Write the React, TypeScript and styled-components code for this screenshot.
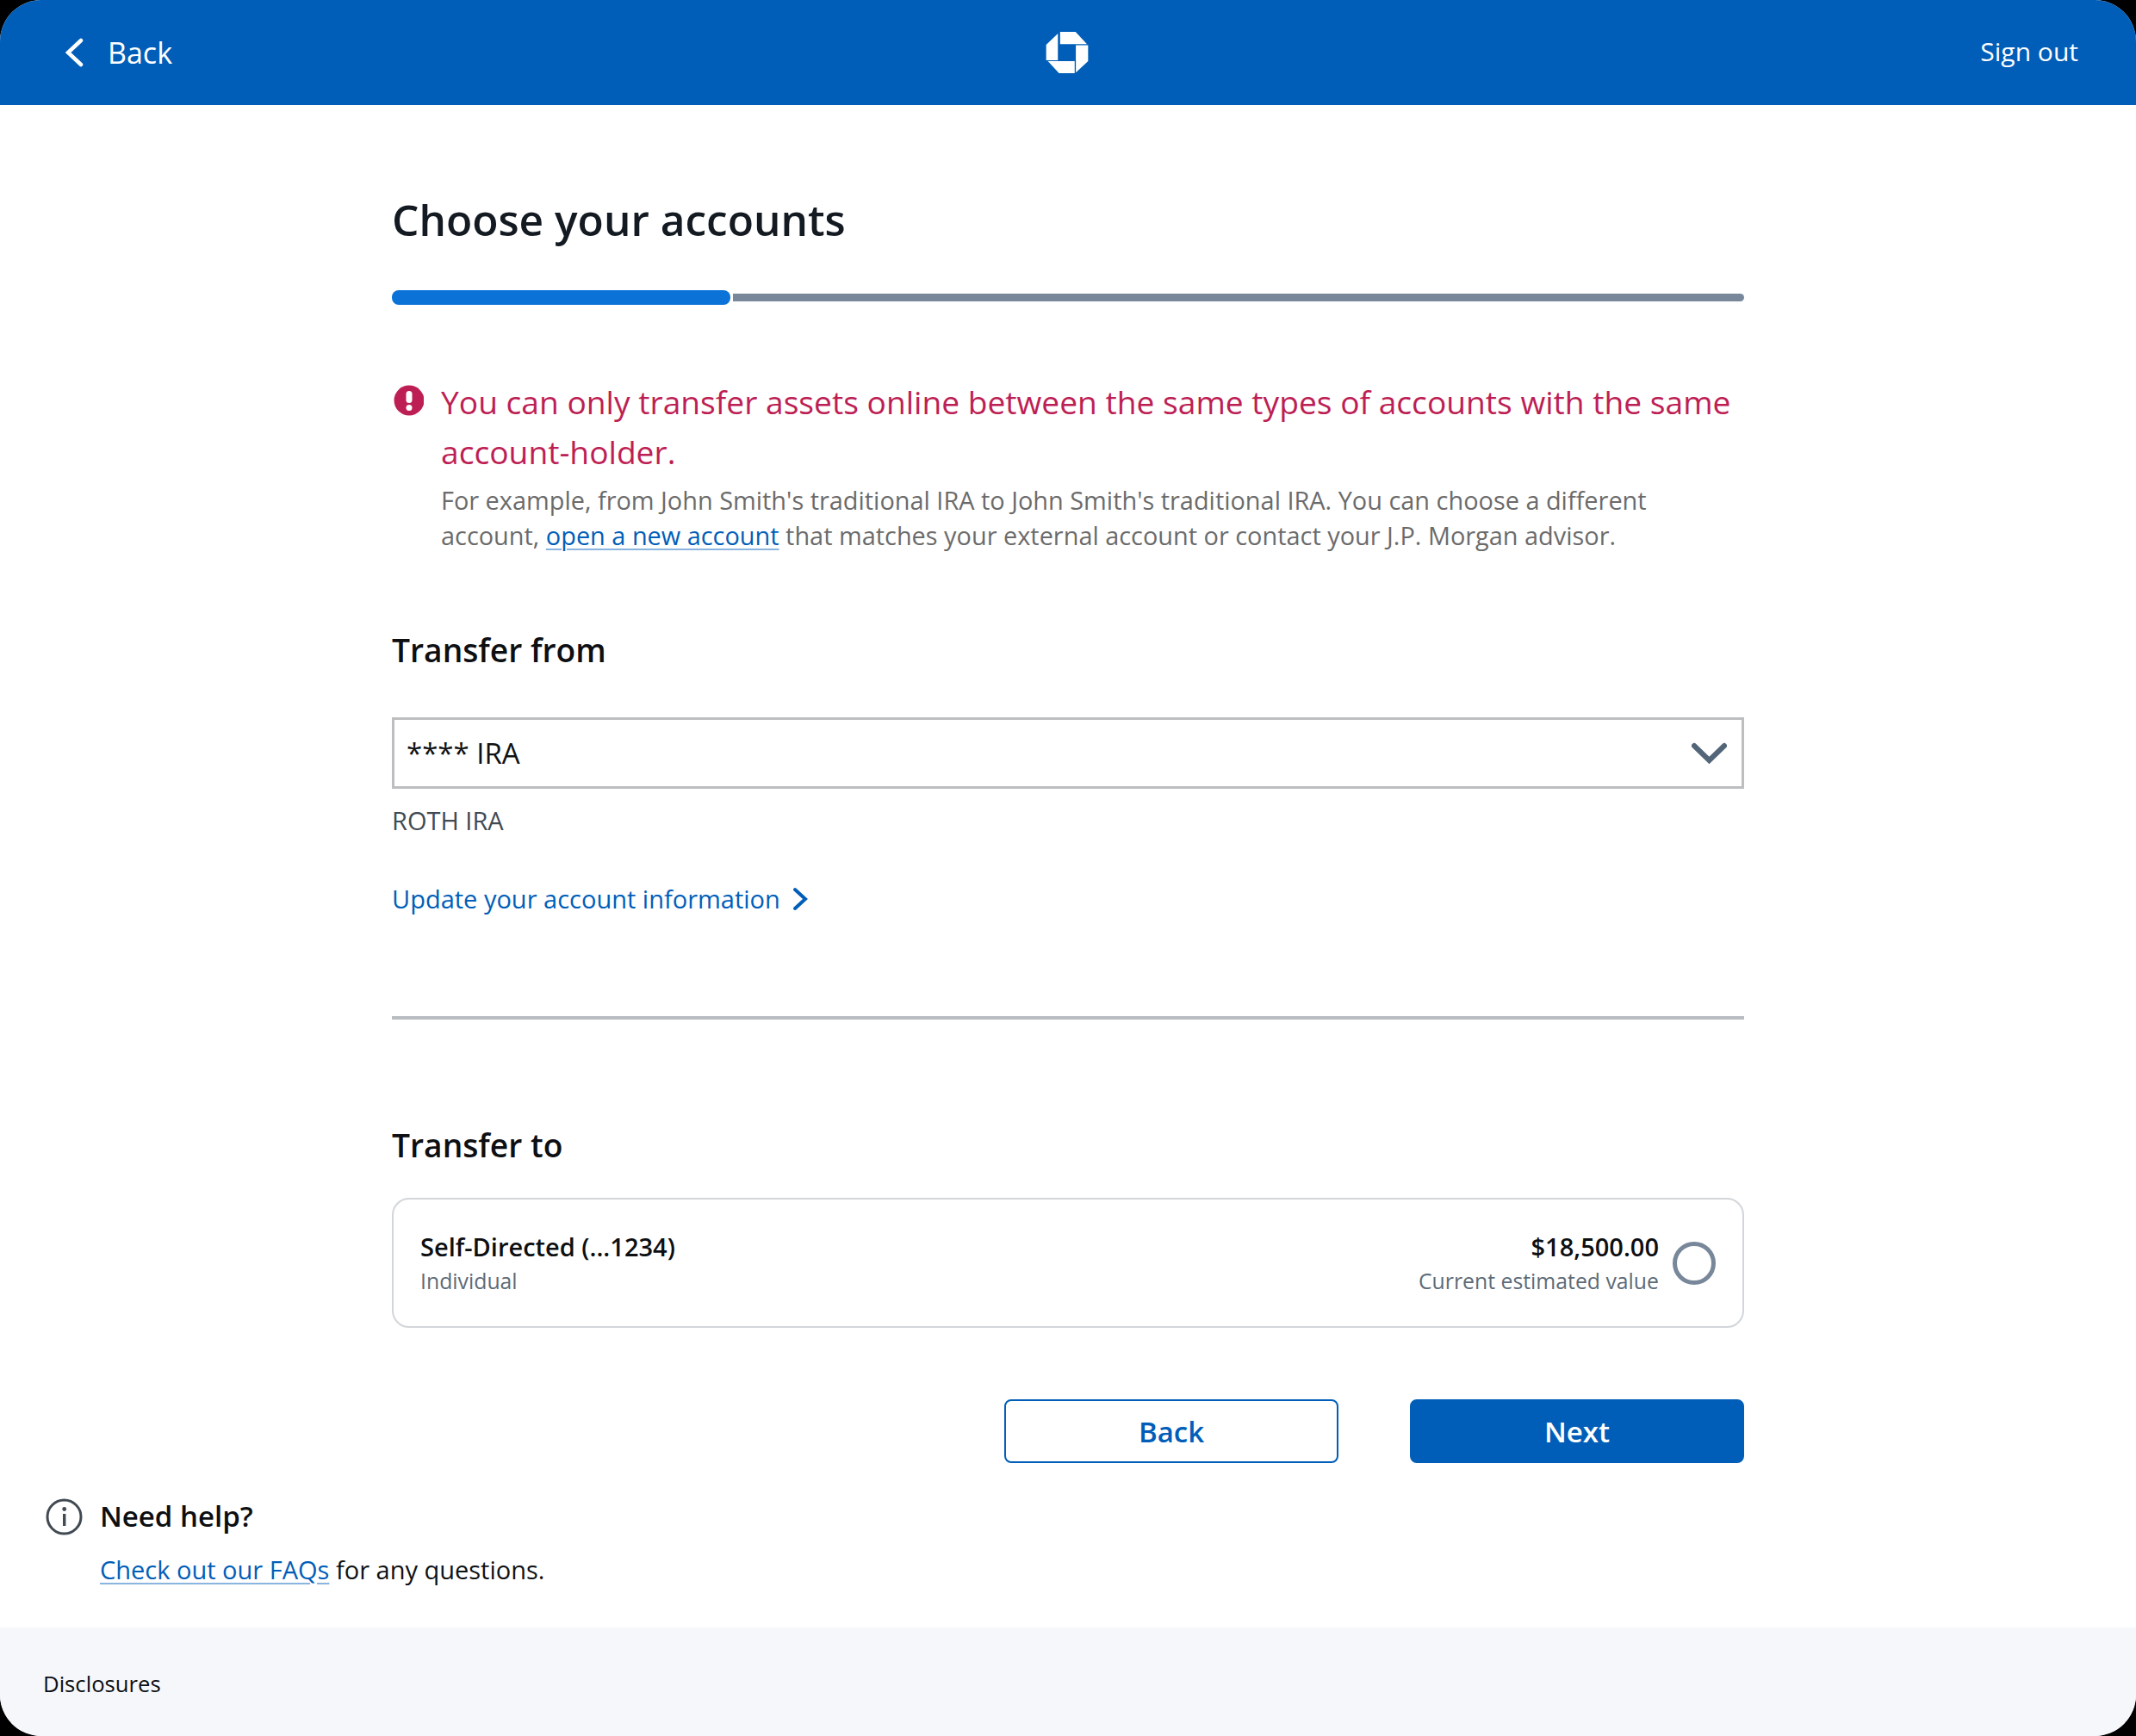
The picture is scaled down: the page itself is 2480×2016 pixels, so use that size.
import React from "react";
import styled, { createGlobalStyle } from "styled-components";

const Global = createGlobalStyle`
  html, body { margin: 0; padding: 0; background: #000; }
  * { box-sizing: border-box; }
  body { font-family: "Open Sans", "Noto Sans", sans-serif; }
`;

const Screen = styled.div`
  width: 2480px;
  height: 2016px;
  background: #fff;
  border-radius: 48px;
  overflow: hidden;
  display: flex;
  flex-direction: column;
`;

const Header = styled.header`
  height: 122px;
  flex: none;
  background: #015eb8;
  color: #fff;
  display: grid;
  grid-template-columns: 1fr auto 1fr;
  align-items: center;
  padding: 0 67px 1px 64px;
`;

const HeaderBack = styled.a`
  display: flex;
  align-items: center;
  gap: 27px;
  margin-left: 12px;
  font-size: 34px;
  font-weight: 500;
`;

const SignOut = styled.a`
  justify-self: end;
  font-size: 30px;
  font-weight: 500;
  margin-bottom: 2px;
`;

const Column = styled.main`
  width: 1570px;
  margin: 0 auto;
  flex: none;
`;

const Title = styled.h1`
  margin: 100px 0 0;
  font-size: 49.6px;
  line-height: 66px;
  font-weight: 600;
  color: #141a21;
`;

const Progress = styled.div`
  margin-top: 49px;
  height: 17px;
  display: flex;
  align-items: center;
  gap: 3px;
`;

const ProgressDone = styled.div`
  width: 393px;
  height: 17px;
  border-radius: 8px;
  background: #0b72d8;
`;

const ProgressRest = styled.div`
  flex: 1;
  height: 9px;
  border-radius: 0 5px 5px 0;
  background: #788799;
`;

const Alert = styled.section`
  margin-top: 83px;
  display: grid;
  grid-template-columns: 37px 1fr;
  column-gap: 20px;
`;

const AlertIcon = styled.svg`
  width: 37px;
  height: 40px;
  margin-top: 8px;
`;

const AlertHead = styled.p`
  margin: 0;
  padding-top: 1px;
  height: 116px;
  font-size: 37.16px;
  line-height: 58px;
  color: #bd1f55;
`;

const AlertBody = styled.p`
  grid-column: 2;
  margin: 7px 0 0;
  font-size: 28.9px;
  line-height: 41px;
  color: #6b6b6b;
`;

const InlineLink = styled.a`
  color: #015eb8;
  text-decoration: underline;
  text-decoration-color: #8ab5e0;
  text-underline-offset: 4px;
  text-decoration-thickness: 2px;
`;

const SectionTitle = styled.h2<{ $top: number }>`
  margin: ${(p) => p.$top}px 0 0;
  font-size: 37.2px;
  line-height: 52px;
  font-weight: 600;
  color: #0d0f12;
`;

const Select = styled.div`
  margin-top: 52px;
  height: 83px;
  border: 3px solid #bcbec0;
  display: flex;
  align-items: center;
  justify-content: space-between;
  padding: 0 17px 0 14px;
  font-size: 33px;
  color: #101214;
`;

const Subtype = styled.div`
  margin-top: 17px;
  font-size: 29px;
  line-height: 40px;
  color: #414a53;
`;

const UpdateLink = styled.a`
  margin-top: 49px;
  display: flex;
  align-items: center;
  gap: 14px;
  font-size: 29px;
  line-height: 44px;
  color: #015eb8;
`;

const Divider = styled.hr`
  margin: 114px 0 0;
  height: 4px;
  border: 0;
  background: #b9bcc0;
`;

const AccountCard = styled.div`
  margin-top: 35px;
  height: 151px;
  border: 2px solid #d2d6da;
  border-radius: 20px;
  padding: 0 31px;
  display: flex;
  align-items: center;
  justify-content: space-between;
`;

const AccountInfo = styled.div<{ $right?: boolean }>`
  display: flex;
  flex-direction: column;
  gap: 1px;
  text-align: ${(p) => (p.$right ? "right" : "left")};
`;

const AccountName = styled.div`
  font-size: 29px;
  line-height: 40px;
  font-weight: 600;
  color: #0d0f12;
`;

const AccountMeta = styled.div`
  font-size: 24.8px;
  line-height: 36px;
  color: #5d6b78;
`;

const AccountValue = styled.div`
  display: flex;
  align-items: center;
  gap: 16px;
`;

const Radio = styled.span`
  width: 50px;
  height: 50px;
  border-radius: 50%;
  border: 5px solid #788799;
`;

const Actions = styled.div`
  margin-top: 83px;
  display: flex;
  justify-content: flex-end;
  gap: 83px;
`;

const Button = styled.button<{ $primary?: boolean }>`
  width: 388px;
  height: 74px;
  border-radius: 8px;
  border: 2px solid #015eb8;
  background: ${(p) => (p.$primary ? "#015eb8" : "#fff")};
  color: ${(p) => (p.$primary ? "#fff" : "#015eb8")};
  font-family: inherit;
  font-size: 33px;
  font-weight: 600;
`;

const Help = styled.section`
  margin-top: 37px;
  padding-left: 53px;
  flex: none;
`;

const HelpHead = styled.div`
  display: flex;
  align-items: center;
  gap: 20px;
  font-size: 33px;
  line-height: 50px;
  font-weight: 600;
  color: #0d0f12;
`;

const HelpBody = styled.p`
  margin: 15px 0 0 63px;
  font-size: 29px;
  line-height: 44px;
  color: #101214;
`;

const Footer = styled.footer`
  margin-top: auto;
  height: 126px;
  flex: none;
  background: #f5f7fb;
  padding: 4px 0 0 50px;
  display: flex;
  align-items: center;
  font-size: 25.7px;
  font-weight: 500;
  color: #0d0f12;
`;

const Chevron = ({ d, color, w, h, sw }: { d: string; color: string; w: number; h: number; sw: number }) => (
  <svg width={w} height={h} viewBox={`0 0 ${w} ${h}`} fill="none">
    <path d={d} stroke={color} strokeWidth={sw} strokeLinecap="round" strokeLinejoin="miter" />
  </svg>
);

const ChaseLogo = () => (
  <svg width="50" height="50" viewBox="100 45 151 149" fill="#fff">
    <path d="M151 47H205L245 90H151Z" />
    <path d="M206 94H249V150L206 190Z" />
    <path d="M143 53V147H102V92Z" />
    <path d="M108 150H202V192H147Z" />
  </svg>
);

export default function App() {
  return (
    <Screen>
      <Global />
      <Header>
        <HeaderBack>
          <Chevron d="M18 3 3 17 18 31" color="#fff" w={22} h={34} sw={4.5} />
          Back
        </HeaderBack>
        <ChaseLogo />
        <SignOut>Sign out</SignOut>
      </Header>
      <Column>
        <Title>Choose your accounts</Title>
        <Progress>
          <ProgressDone />
          <ProgressRest />
        </Progress>
        <Alert>
          <AlertIcon viewBox="0 0 37 40">
            <circle cx="20" cy="20" r="17.5" fill="#bd1f55" />
            <rect x="16.5" y="9" width="7" height="14" rx="3.5" fill="#fff" />
            <circle cx="20" cy="28.5" r="3.5" fill="#fff" />
          </AlertIcon>
          <AlertHead>
            You can only transfer assets online between the same types of accounts with the same account-holder.
          </AlertHead>
          <AlertBody>
            For example, from John Smith's traditional IRA to John Smith's traditional IRA. You can choose a different
            account, <InlineLink>open a new account</InlineLink> that matches your external account or contact your
            J.P. Morgan advisor.
          </AlertBody>
        </Alert>
        <SectionTitle $top={87}>Transfer from</SectionTitle>
        <Select>
          **** IRA
          <Chevron d="M3 4 20.5 21 38 4" color="#536679" w={41} h={26} sw={6} />
        </Select>
        <Subtype>ROTH IRA</Subtype>
        <UpdateLink>
          Update your account information
          <Chevron d="M3 3 15 14 3 25" color="#015eb8" w={18} h={28} sw={4} />
        </UpdateLink>
        <Divider />
        <SectionTitle $top={120}>Transfer to</SectionTitle>
        <AccountCard>
          <AccountInfo>
            <AccountName>Self-Directed (...1234)</AccountName>
            <AccountMeta>Individual</AccountMeta>
          </AccountInfo>
          <AccountValue>
            <AccountInfo $right>
              <AccountName>$18,500.00</AccountName>
              <AccountMeta>Current estimated value</AccountMeta>
            </AccountInfo>
            <Radio />
          </AccountValue>
        </AccountCard>
        <Actions>
          <Button>Back</Button>
          <Button $primary>Next</Button>
        </Actions>
      </Column>
      <Help>
        <HelpHead>
          <svg width="43" height="43" viewBox="0 0 43 43" fill="none">
            <circle cx="21.5" cy="21.5" r="19.5" stroke="#414a53" strokeWidth="3" />
            <rect x="20" y="18" width="3.4" height="14" fill="#414a53" />
            <circle cx="21.7" cy="12.5" r="2.4" fill="#414a53" />
          </svg>
          Need help?
        </HelpHead>
        <HelpBody>
          <InlineLink>Check out our FAQs</InlineLink> for any questions.
        </HelpBody>
      </Help>
      <Footer>Disclosures</Footer>
    </Screen>
  );
}
